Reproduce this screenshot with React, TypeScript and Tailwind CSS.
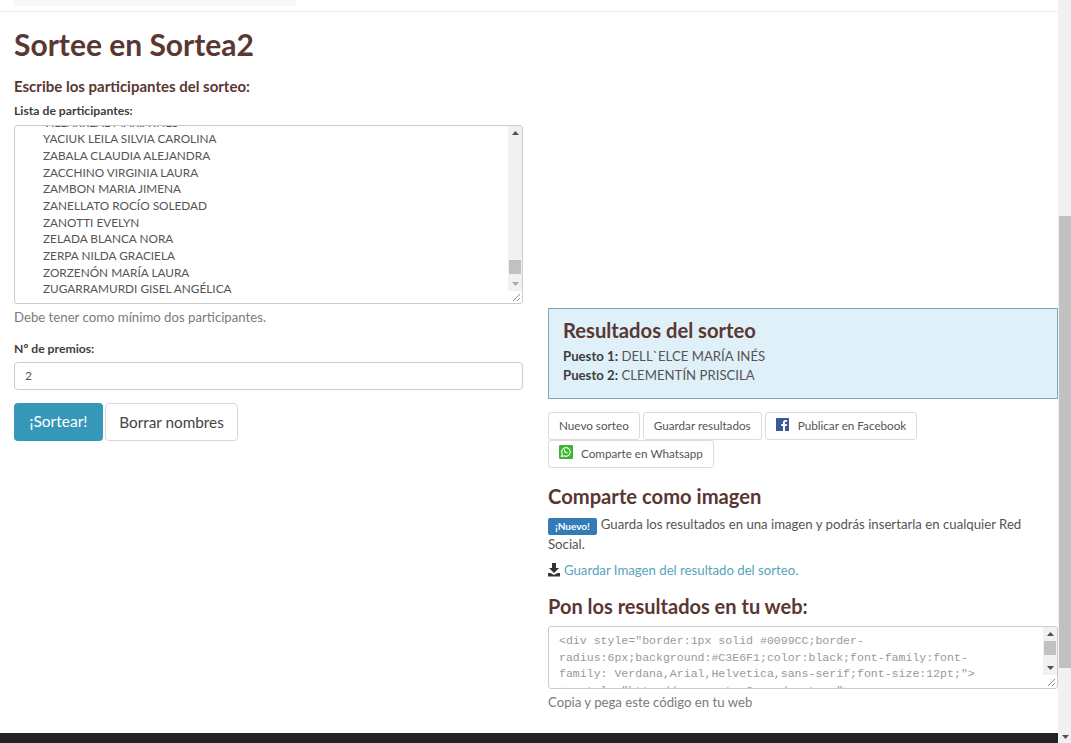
import React from 'react'

const participantes = [
  'VILLARREAL MARÍA INÉS',
  'YACIUK LEILA SILVIA CAROLINA',
  'ZABALA CLAUDIA ALEJANDRA',
  'ZACCHINO VIRGINIA LAURA',
  'ZAMBON MARIA JIMENA',
  'ZANELLATO ROCÍO SOLEDAD',
  'ZANOTTI EVELYN',
  'ZELADA BLANCA NORA',
  'ZERPA NILDA GRACIELA',
  'ZORZENÓN MARÍA LAURA',
  'ZUGARRAMURDI GISEL ANGÉLICA',
]

const codigo = [
  '<div style="border:1px solid #0099CC;border-',
  'radius:6px;background:#C3E6F1;color:black;font-family:font-',
  'family: Verdana,Arial,Helvetica,sans-serif;font-size:12pt;">',
  '<a style="http://www.sortea2.com/sorteos">',
]

const Grip = () => (
  <svg className="absolute bottom-[1px] right-[1px]" width="10" height="10" viewBox="0 0 10 10">
    <path d="M2 9 9 2M6 9 9 6" stroke="#8a8a8a" strokeWidth="1" fill="none" />
  </svg>
)

const BarArrow = (props: { down?: boolean; color?: string }) => (
  <svg width="7" height="4" viewBox="0 0 7 4" className="mx-auto">
    <path d={props.down ? 'M0 0h7L3.5 4z' : 'M0 4h7L3.5 0z'} fill={props.color || '#505050'} />
  </svg>
)

const MiniScroll = (props: { thumbTop: number; thumbHeight: number; height: number; downColor?: string }) => (
  <div className="w-[14px] shrink-0 bg-[#f1f1f1] flex flex-col" style={{ height: props.height }}>
    <div className="h-[14px] flex items-center justify-center">
      <BarArrow />
    </div>
    <div className="flex-1 px-[1px]" style={{ paddingTop: props.thumbTop }}>
      <div className="bg-[#c1c1c1]" style={{ height: props.thumbHeight }} />
    </div>
    <div className="h-[14px] flex items-center justify-center">
      <BarArrow down color={props.downColor} />
    </div>
  </div>
)

const SmallBtn = (props: { children: React.ReactNode }) => (
  <button className="h-[28px] px-[10px] flex items-center bg-white border border-[#dcdcdc] rounded-[3px] text-[11.7px] text-[#555]">
    {props.children}
  </button>
)

const FacebookIcon = () => (
  <svg width="13" height="13" viewBox="0 0 13 13" className="mr-[9px] -mt-[4px] shrink-0">
    <rect width="13" height="13" fill="#3b5998" />
    <path d="M9 13V8h1.800l.3-2H9V4.800c0-.6.2-1 1-1h1.100V2c-.3 0-.9-.1-1.500-.1C8 1.900 7 2.800 7 4.500V6H5.300v2H7v5z" fill="#fff" />
  </svg>
)

const WhatsappIcon = () => (
  <svg width="14" height="14" viewBox="0 0 14 14" className="mr-[8px] -mt-[4px] shrink-0">
    <rect width="14" height="14" rx="1" fill="#3cb62c" />
    <path d="M2.500 11.500l.7-2.400A4.300 4.300 0 1 1 5 10.800z" fill="none" stroke="#fff" strokeWidth="1.100" />
    <path d="M5.300 4.800c.5-.5.800-.3 1 .4.100.4-.4.600-.3.900.2.500.7 1 1.200 1.200.3.100.5-.4.900-.3.700.2.900.500.4 1-.6.600-1.700.3-2.700-.6-1-.9-1.100-2-.5-2.600z" fill="#fff" />
  </svg>
)

export default function App() {
  return (
    <div className="h-[743px] flex overflow-hidden bg-white font-['Lato','Noto_Sans',sans-serif] text-[#555]">
      <div className="flex-1 min-w-0 flex flex-col">
        <div className="h-[12px] shrink-0 border-b border-[#ececec] pl-[14px]">
          <div className="w-[282px] h-[6px] bg-[#f7f7f7]" />
        </div>

        <div className="flex-1 flex pl-[14px] gap-[25px]">
          <div className="w-[509px] shrink-0">
            <h1 className="mt-[14px] text-[30px] leading-[36px] font-bold text-[#5a3733]">Sortee en Sortea2</h1>
            <h3 className="mt-[14px] text-[15px] leading-[20px] font-bold text-[#5a3733]">Escribe los participantes del sorteo:</h3>
            <label className="block mt-[7px] text-[12.2px] leading-[16px] font-bold text-[#3d3d3d]">Lista de participantes:</label>
            <div className="relative mt-[6px] h-[179px] flex border border-[#cccccc] rounded-[3px] overflow-hidden">
              <div className="flex-1 min-w-0 pl-[28px] -mt-[11.5px] text-[11.8px] leading-[16.67px] text-[#555]">
                {participantes.map((p) => (
                  <div key={p}>{p}</div>
                ))}
              </div>
              <MiniScroll height={165} thumbTop={120} thumbHeight={14} downColor="#a8a8a8" />
              <Grip />
            </div>
            <p className="mt-[5px] text-[13.2px] leading-[17px] text-[#7b7b7b]">Debe tener como mínimo dos participantes.</p>
            <label className="block mt-[15px] text-[12.2px] leading-[16px] font-bold text-[#3d3d3d]">Nº de premios:</label>
            <div className="mt-[5px] h-[28px] px-[10px] flex items-center border border-[#cccccc] rounded-[4px] text-[12px] text-[#555]">2</div>
            <div className="mt-[13px] flex gap-[2px]">
              <button className="h-[38px] w-[89px] bg-[#3698b9] rounded-[4px] text-white text-[15.5px]">¡Sortear!</button>
              <button className="h-[38px] w-[133px] bg-white border border-[#d8d8d8] rounded-[4px] text-[15.3px] text-[#444]">Borrar nombres</button>
            </div>
          </div>

          <div className="w-[510px] shrink-0 pt-[296px]">
            <div className="h-[91px] bg-[#dff0f8] border border-[#7ba9b8] px-[14px] pt-[9px]">
              <h3 className="text-[20.2px] leading-[24px] font-bold text-[#5a3733]">Resultados del sorteo</h3>
              <div className="mt-[5px] text-[13.2px] leading-[18.5px] text-[#555]">
                <div><b className="text-[#3d3d3d]">Puesto 1:</b> DELL`ELCE MARÍA INÉS</div>
                <div><b className="text-[#3d3d3d]">Puesto 2:</b> CLEMENTÍN PRISCILA</div>
              </div>
            </div>

            <div className="mt-[13px] flex flex-wrap gap-x-[3px] gap-y-0 w-[400px]">
              <SmallBtn>Nuevo sorteo</SmallBtn>
              <SmallBtn>Guardar resultados</SmallBtn>
              <SmallBtn>
                <FacebookIcon />
                Publicar en Facebook
              </SmallBtn>
              <SmallBtn>
                <WhatsappIcon />
                Comparte en Whatsapp
              </SmallBtn>
            </div>

            <h3 className="mt-[15px] text-[20.2px] leading-[26px] font-bold text-[#5a3733]">Comparte como imagen</h3>
            <p className="mt-[6px] pr-[15px] text-[13.2px] leading-[18px] text-[#555]">
              <span className="inline-block align-[-1px] mr-[4px] px-[7px] h-[17px] leading-[17px] bg-[#337ab7] rounded-[2px] text-[10px] font-bold text-white">¡Nuevo!</span>
              Guarda los resultados en una imagen y podrás insertarla en cualquier Red Social.
            </p>
            <p className="mt-[8px] flex items-center gap-[4px] text-[13.2px] leading-[18px] text-[#58a3bd]">
              <svg width="12" height="14" viewBox="0 0 12 14" className="shrink-0">
                <path d="M4 0h4v5h3L6 10 1 5h3zM0 10h2.500L6 12l3.500-2H12v3.500H0z" fill="#333" />
              </svg>
              Guardar Imagen del resultado del sorteo.
            </p>

            <h3 className="mt-[14px] text-[20px] leading-[26px] font-bold text-[#5a3733]">Pon los resultados en tu web:</h3>
            <div className="relative mt-[7px] h-[63px] flex border border-[#cccccc] rounded-[3px] overflow-hidden">
              <div className="flex-1 min-w-0 pl-[10px] pt-[6px] font-['Liberation_Mono',monospace] text-[11.55px] leading-[16.67px] text-[#999] whitespace-pre">
                {codigo.map((c) => (
                  <div key={c}>{c}</div>
                ))}
              </div>
              <MiniScroll height={48} thumbTop={0} thumbHeight={14} />
              <Grip />
            </div>
            <p className="mt-[5px] text-[13.2px] leading-[17px] text-[#7b7b7b]">Copia y pega este código en tu web</p>
          </div>
        </div>

        <div className="h-[10px] shrink-0 bg-[#222222]" />
      </div>

      <div className="w-[13px] shrink-0 bg-[#f1f1f1] flex flex-col pl-[1px]">
        <div className="h-[216px]" />
        <div className="h-[452px] bg-[#c1c1c1]" />
        <div className="flex-1 flex items-end pb-[4px]">
          <BarArrow down />
        </div>
      </div>
    </div>
  )
}
